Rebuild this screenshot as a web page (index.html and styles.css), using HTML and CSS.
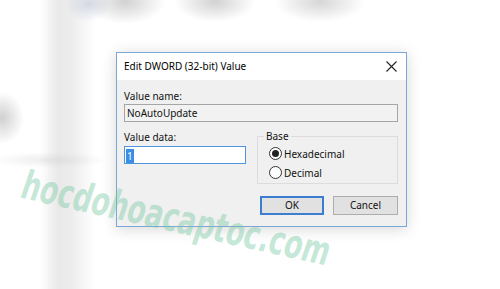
FILE: index.html
```html
<!DOCTYPE html>
<html>
<head>
<meta charset="utf-8">
<link rel="stylesheet" href="styles.css">
</head>
<body>
<div class="stage">
  <div class="dialog">
    <div class="titlebar">
      <span class="title">Edit DWORD (32-bit) Value</span>
      <svg class="close" width="11" height="11" viewBox="0 0 11 11"><path d="M0.5 0.5L10.5 10.5M10.5 0.5L0.5 10.5" stroke="#222" stroke-width="1.1" fill="none"/></svg>
    </div>
    <div class="content">
      <div class="label">Value name:</div>
      <div class="field readonly">NoAutoUpdate</div>
      <div class="row">
        <div class="col">
          <div class="label">Value data:</div>
          <div class="field edit"><span class="sel">1</span></div>
        </div>
        <fieldset class="group">
          <legend>Base</legend>
          <div class="radio"><span class="dot checked"></span>Hexadecimal</div>
          <div class="radio"><span class="dot"></span>Decimal</div>
        </fieldset>
      </div>
      <div class="buttons">
        <div class="btn default">OK</div>
        <div class="btn">Cancel</div>
      </div>
    </div>
  </div>
</div>
<div class="watermark">hocdohoacaptoc.com</div>
</body>
</html>
```
FILE: styles.css
```css
html, body {
  margin: 0;
  padding: 0;
}
body {
  width: 500px;
  height: 289px;
  overflow: hidden;
  position: relative;
  font-family: "Noto Sans", "Open Sans", sans-serif;
  font-size: 10px;
  color: #111;
  background:
    radial-gradient(ellipse 40px 22px at 125px 2px, rgba(165,165,165,0.5), transparent),
    radial-gradient(ellipse 40px 20px at 215px 2px, rgba(165,165,165,0.5), transparent),
    radial-gradient(ellipse 45px 20px at 320px 2px, rgba(165,165,165,0.45), transparent),
    radial-gradient(ellipse 22px 18px at 88px 4px, rgba(160,170,200,0.4), transparent),
    radial-gradient(ellipse 22px 26px at 2px 118px, rgba(150,150,150,0.45), transparent),
    radial-gradient(ellipse 60px 8px at 50px 160px, rgba(200,200,200,0.35), transparent),
    linear-gradient(90deg, rgba(255,255,255,0) 40px, rgba(215,215,215,0.55) 58px, rgba(225,225,225,0.6) 72px, rgba(255,255,255,0) 95px),
    #ffffff;
}
.stage {
  display: flex;
  padding: 52px 0 0 116px;
}
.dialog {
  width: 291px;
  box-sizing: border-box;
  border: 1px solid #7ba7d7;
  background: #f0f0f0;
  box-shadow: 0 2px 14px rgba(0,0,0,0.16);
}
.titlebar {
  height: 27px;
  background: #fff;
  display: flex;
  align-items: center;
  justify-content: space-between;
  padding: 0 9px 0 7px;
}
.title {
  font-size: 10px;
  color: #000;
  margin-top: -1px;
}
.content {
  padding: 9px 8px 11px 7px;
}
.label {
  line-height: 14px;
  height: 14px;
}
.field {
  box-sizing: border-box;
  height: 18px;
  line-height: 16px;
  padding: 0 2px;
}
.readonly {
  margin-top: 1px;
  border: 1px solid #a5a5a5;
  background: #f2f2f2;
}
.row {
  display: flex;
  justify-content: space-between;
  margin-top: 8px;
}
.col {
  width: 122px;
}
.edit {
  margin-top: 2px;
  border: 1px solid #4f95dc;
  background: #fff;
  padding: 1px;
}
.sel {
  display: inline-block;
  background: #3a8ee6;
  color: #fff;
  height: 14px;
  line-height: 14px;
  padding: 0 1px;
}
.group {
  margin: 0;
  width: 141px;
  box-sizing: border-box;
  height: 54px;
  border: 1px solid #dcdcdc;
  padding: 2px 0 0 11px;
}
.group legend {
  padding: 0 2px;
  margin-left: -5px;
  line-height: 12px;
}
.radio {
  display: flex;
  align-items: center;
  height: 19px;
  gap: 2px;
}
.dot {
  box-sizing: border-box;
  width: 13px;
  height: 13px;
  border: 1px solid #333;
  border-radius: 50%;
  background: #fff;
  display: flex;
  align-items: center;
  justify-content: center;
}
.dot.checked::after {
  content: "";
  width: 7px;
  height: 7px;
  border-radius: 50%;
  background: #222;
}
.buttons {
  display: flex;
  justify-content: flex-end;
  gap: 9px;
  margin-top: 12px;
}
.btn {
  box-sizing: border-box;
  height: 19px;
  line-height: 17px;
  text-align: center;
  border: 1px solid #adadad;
  background: #e1e1e1;
}
.btn.default {
  width: 64px;
  border: 2px solid #3c7fd1;
  line-height: 15px;
}
.btn:not(.default) {
  width: 65px;
}
.watermark {
  position: absolute;
  left: 30px;
  top: 163px;
  font-family: "DejaVu Sans", sans-serif;
  font-weight: bold;
  font-size: 40px;
  line-height: 44px;
  color: rgba(115, 200, 160, 0.42);
  transform-origin: 0 0;
  transform: rotate(12.5deg) skewX(-6deg) scaleX(0.66);
  pointer-events: none;
  white-space: nowrap;
}
```
